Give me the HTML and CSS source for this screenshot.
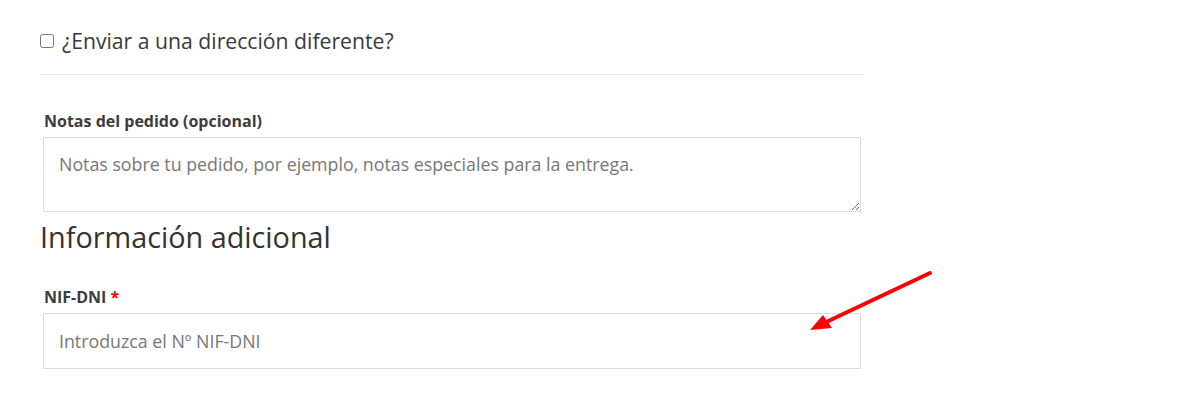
FILE: index.html
```html
<!DOCTYPE html>
<html lang="es">
<head>
    <meta charset="UTF-8">
    <title>Checkout</title>
    <link rel="stylesheet" href="styles.css">
</head>
<body>
    <div class="checkout">
        <div class="ship-different">
            <label class="ship-label">
                <input type="checkbox" class="ship-check">
                <span>¿Enviar a una dirección diferente?</span>
            </label>
        </div>

        <div class="field notes">
            <label class="field-label">Notas del pedido (opcional)</label>
            <textarea class="field-input textarea" placeholder="Notas sobre tu pedido, por ejemplo, notas especiales para la entrega."></textarea>
        </div>

        <h3 class="section-title">Información adicional</h3>

        <div class="field nif">
            <label class="field-label">NIF-DNI <span class="required">*</span></label>
            <input type="text" class="field-input text" placeholder="Introduzca el Nº NIF-DNI">
        </div>

        <svg class="arrow" width="140" height="80" viewBox="0 0 140 80">
            <line x1="130" y1="13" x2="22" y2="64" stroke="#ff0000" stroke-width="4" stroke-linecap="round"/>
            <polygon points="10,70 23,55 32,68" fill="#ff0000"/>
        </svg>
    </div>
</body>
</html>
```

FILE: styles.css
```css
body {
    margin: 0;
    background: #ffffff;
    font-family: "Open Sans", "Noto Sans", sans-serif;
    color: #404040;
}
.checkout {
    position: relative;
    width: 824px;
    margin-left: 40px;
    padding-top: 27px;
}
.ship-different {
    padding-bottom: 19px;
    border-bottom: 1px solid #e6e6e6;
}
.ship-label {
    display: flex;
    align-items: center;
    gap: 8px;
    font-size: 21.2px;
    line-height: 28px;
    color: #3a3a3a;
}
.ship-check {
    margin: 0;
    width: 14px;
    height: 14px;
}
.field {
    padding-left: 3px;
}
.notes {
    margin-top: 36px;
}
.field-label {
    display: block;
    padding-left: 1px;
    font-size: 16px;
    font-weight: bold;
    color: #3c3c3c;
    line-height: 21px;
    margin-bottom: 5px;
}
.required {
    color: #ff0000;
}
.field-input {
    display: block;
    box-sizing: border-box;
    width: 818px;
    border: 1px solid #dddddd;
    font-family: "Open Sans", "Noto Sans", sans-serif;
    font-size: 17.8px;
    color: #404040;
    padding: 0 15px;
    margin: 0;
    border-radius: 0;
    outline: none;
}
.field-input::placeholder {
    color: #777777;
}
.textarea {
    height: 75px;
    padding-top: 14px;
    resize: vertical;
}
.text {
    height: 56px;
}
.section-title {
    margin: 6px 0 0;
    font-size: 28.8px;
    font-weight: normal;
    color: #333333;
    line-height: 38px;
}
.nif {
    margin-top: 31px;
}
.arrow {
    position: absolute;
    left: 760px;
    top: 260px;
}
```
